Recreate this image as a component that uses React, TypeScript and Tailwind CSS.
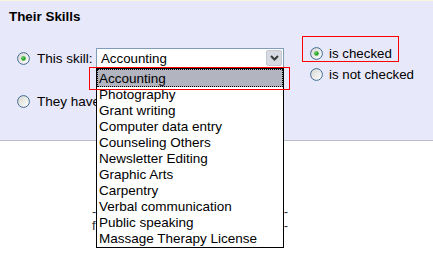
import React from "react";

function Radio({ checked }: { checked: boolean }) {
  const id = checked ? "rgc" : "rgu";
  return (
    <svg width="13" height="13" viewBox="0 0 13 13" className="block shrink-0">
      <defs>
        <linearGradient id={id} x1="0" y1="0" x2="1" y2="1">
          <stop offset="0" stopColor="#d6d6d0" />
          <stop offset="1" stopColor="#ffffff" />
        </linearGradient>
      </defs>
      <circle cx="6.5" cy="6.5" r="5.9" fill={`url(#${id})`} stroke="#3f6a96" strokeWidth="1" />
      {checked && <circle cx="6.5" cy="6.5" r="2.3" fill="#27a827" />}
      {checked && <circle cx="6" cy="6" r="0.8" fill="#8fe08f" />}
    </svg>
  );
}

const items = [
  "Photography",
  "Grant writing",
  "Computer data entry",
  "Counseling Others",
  "Newsletter Editing",
  "Graphic Arts",
  "Carpentry",
  "Verbal communication",
  "Public speaking",
  "Massage Therapy License",
];

export default function App() {
  return (
    <div
      className="relative w-[433px] h-[257px] overflow-hidden bg-white text-black"
      style={{ fontFamily: '"Liberation Sans", Arial, sans-serif' }}
    >
      <div className="h-[1px] bg-[#fcf3dc]" />
      <div className="h-[140px] bg-[#e8e8fb] border-b border-[#bcbccb] pt-[8px] pl-[9px]">
        <div className="text-[13.4px] leading-[15px] font-bold">Their Skills</div>
        <div className="mt-[19px] flex items-start">
          <div className="mt-[5px] ml-[8px] h-[20px] flex items-center">
            <Radio checked />
            <span className="ml-[7px] w-[59px] text-[13.5px] leading-[15px]">This skill:</span>
            <div className="relative w-[188px] h-[20px] border border-[#7f9db9] bg-white flex items-center">
              <span className="ml-[4px] text-[13.3px] leading-[15px]">Accounting</span>
              <div className="absolute right-[1px] top-[1px] w-[16px] h-[16px] rounded-[2px] bg-[#d8dae2] border border-[#c4c8d4] flex items-center justify-center">
                <svg width="9" height="6" viewBox="0 0 9 6">
                  <path d="M1 1 L4.5 4.5 L8 1" fill="none" stroke="#3a3a3a" strokeWidth="2" />
                </svg>
              </div>
            </div>
          </div>
          <div className="ml-[26px] flex flex-col">
            <div className="h-[21px] flex items-center">
              <Radio checked />
              <span className="ml-[6px] text-[13.3px] leading-[15px]">is checked</span>
            </div>
            <div className="h-[21px] flex items-center">
              <Radio checked={false} />
              <span className="ml-[6px] text-[13.3px] leading-[15px]">is not checked</span>
            </div>
          </div>
        </div>
        <div className="mt-[9px] ml-[8px] flex items-center h-[15px]">
          <Radio checked={false} />
          <span className="ml-[7px] text-[13.5px] leading-[15px]">They have</span>
        </div>
      </div>

      <div className="mt-[64px] ml-[92px] w-[196px] text-[13px] leading-[14px] text-[#333]">
        <div className="flex justify-between"><span>-</span><span>-</span></div>
        <div className="flex justify-between"><span>f</span><span>-</span></div>
      </div>

      {/* dropdown list overlay */}
      <div className="absolute left-[96px] top-[68px] w-[188px] h-[180px] border border-black bg-white text-[13.5px]">
        <div className="h-[18px] bg-[#b2b4bf] border border-dotted border-black flex items-center pl-[1px] leading-[15px]">
          Accounting
        </div>
        {items.map((it) => (
          <div key={it} className="h-[16px] pl-[2px] leading-[16px] whitespace-nowrap">
            {it}
          </div>
        ))}
      </div>

      {/* red highlight rectangles */}
      <div className="absolute left-[89px] top-[67px] w-[201px] h-[23px] border border-[#ff0000]" />
      <div className="absolute left-[302px] top-[36px] w-[97px] h-[26px] border border-[#ff0000]" />
    </div>
  );
}
